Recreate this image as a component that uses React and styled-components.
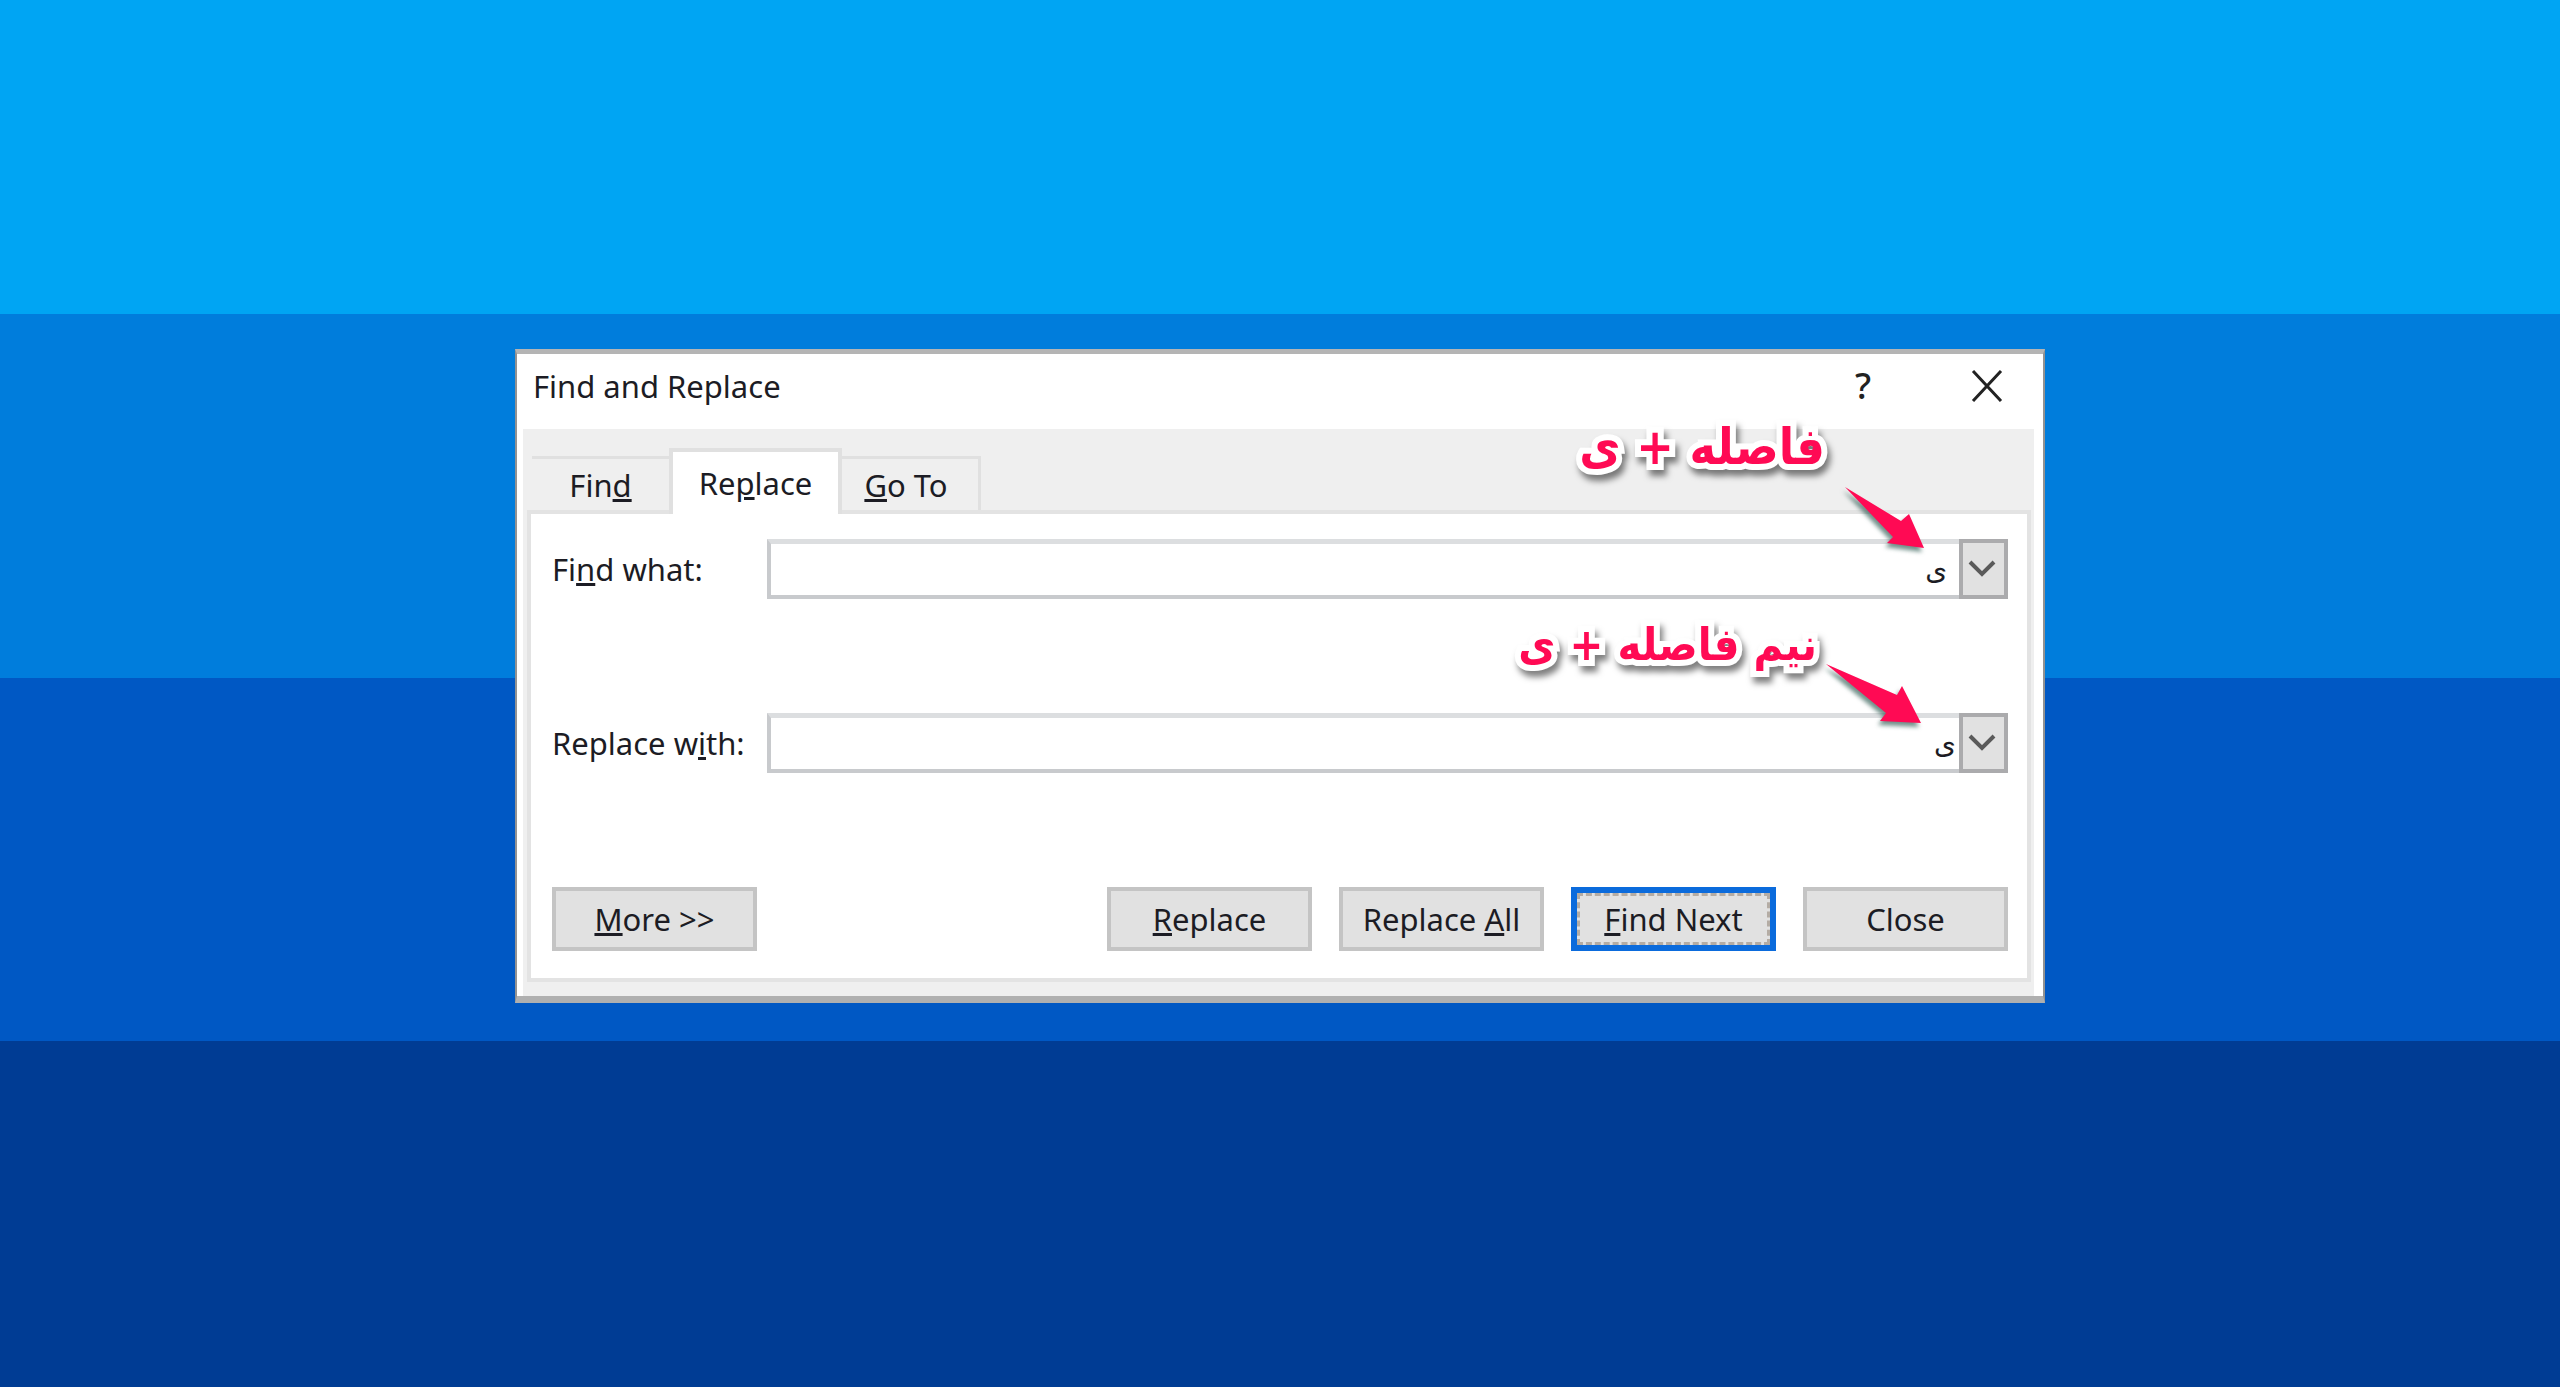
import styled, { createGlobalStyle } from "styled-components";

const GlobalStyle = createGlobalStyle`
  * {
    box-sizing: border-box;
  }

  body {
    margin: 0;
    font-family: "Noto Sans", "DejaVu Sans", sans-serif;
    font-size: 31px;
    line-height: 40px;
    color: #1c1c24;
  }
`;

const Desktop = styled.main`
  min-height: 100vh;
  padding-top: 349px;
  background: linear-gradient(
    #00a5f3 314px,
    #007ddc 314px 678px,
    #0058c4 678px 1041px,
    #003c94 1041px
  );
`;

const Dialog = styled.section`
  position: relative;
  width: 60%;
  max-width: 1530px;
  margin: 0 auto;
  padding: 0 9px 0 6px;
  background: #fff;
  border: solid #929292;
  border-width: 5px 2px 7px;
  border-top-color: #b4b4b4;
  border-bottom-color: #b0b0b0;
`;

const TitleBar = styled.header`
  display: flex;
  align-items: center;
  justify-content: space-between;
  height: 75px;
  padding: 0 29px 12px 10px;

  h1 {
    margin: 0;
    font-size: inherit;
    font-weight: 400;
  }
`;

const WindowButtons = styled.div`
  display: flex;
  gap: 88px;
`;

const WindowButton = styled.button`
  display: flex;
  align-items: center;
  justify-content: center;
  width: 36px;
  height: 40px;
  padding: 0;
  border: 0;
  background: none;
  font: 500 36px/40px "Noto Sans", sans-serif;
  color: #222;
`;

const Body = styled.div`
  padding: 19px 3px 14px 4px;
  background: #efefef;
`;

const Tabs = styled.div`
  display: flex;
  align-items: flex-end;
  padding-left: 5px;
`;

const Tab = styled.button`
  width: ${({ $width }) => $width}px;
  height: ${({ $active }) => ($active ? 66 : 54)}px;
  margin-bottom: ${({ $active }) => ($active ? -4 : 0)}px;
  padding: 0;
  border: solid #e0e0e0;
  border-width: ${({ $sides }) => $sides};
  background: ${({ $active }) => ($active ? "#fff" : "#efefef")};
  font: inherit;
  color: inherit;
  z-index: ${({ $active }) => ($active ? 1 : 0)};

  &:last-child {
    padding-right: 8px;
  }
`;

const Panel = styled.div`
  padding: 25px 19px 27px 21px;
  border: 4px solid #e3e3e3;
  background: #fff;
`;

const Field = styled.div`
  display: flex;
  align-items: center;
  margin-bottom: 114px;

  label {
    width: 215px;
    white-space: nowrap;
  }
`;

const Combo = styled.div`
  display: flex;
  flex: 1;
  height: 60px;
`;

const ComboInput = styled.input`
  flex: 1;
  min-width: 0;
  padding: 0 3px;
  border: solid #c8cacd;
  border-width: 5px 0 4px 4px;
  border-top-color: #dcdee0;
  background: #fff;
  font: 28px/40px "DejaVu Sans", sans-serif;
  color: #1c1c24;
  outline: 0;
`;

const ComboButton = styled.button`
  display: flex;
  align-items: center;
  justify-content: center;
  width: 49px;
  padding: 0 4px 0 0;
  border: 4px solid #ababad;
  background: #e1e1e1;
`;

const Actions = styled.div`
  display: flex;
  gap: 27px;
`;

const ActionButton = styled.button`
  width: 205px;
  height: 64px;
  padding: 0;
  border: ${({ $primary }) => ($primary ? "6px solid #0b6bdc" : "4px solid #c4c4c4")};
  outline: ${({ $primary }) => ($primary ? "3px dashed #b4aca4" : "0")};
  outline-offset: -9px;
  background: #e1e1e1;
  font: inherit;
  color: inherit;
  white-space: nowrap;

  &:first-child {
    margin-right: auto;
  }
`;

const Note = styled.p`
  position: absolute;
  top: ${({ $top }) => $top}px;
  right: ${({ $right }) => $right}px;
  margin: 0;
  font: 700 ${({ $size }) => $size}px/60px "DejaVu Sans Condensed", "DejaVu Sans", sans-serif;
  color: #ff0a54;
  white-space: nowrap;
  paint-order: stroke fill;
  -webkit-text-stroke: 12px #fff;
  filter: drop-shadow(3px 6px 3px rgba(0, 0, 0, 0.5));
`;

const Arrow = styled.svg`
  position: absolute;
  top: ${({ $top }) => $top}px;
  right: ${({ $right }) => $right}px;
  fill: #ff0a54;
  filter: drop-shadow(-2px 4px 2px rgba(20, 70, 60, 0.6));
`;

function ComboField({ id, label, value }) {
  return (
    <Field>
      <label htmlFor={id}>{label}</label>
      <Combo>
        <ComboInput id={id} dir="rtl" defaultValue={value} />
        <ComboButton aria-label="Open list">
          <svg width="28" height="18" viewBox="0 0 28 18" fill="none" stroke="#5a5a5a" strokeWidth="4">
            <path d="M2 2l12 12L26 2" />
          </svg>
        </ComboButton>
      </Combo>
    </Field>
  );
}

function App() {
  return (
    <>
      <GlobalStyle />
      <Desktop>
        <Dialog role="dialog" aria-labelledby="title">
          <TitleBar>
            <h1 id="title">Find and Replace</h1>
            <WindowButtons>
              <WindowButton aria-label="Help">?</WindowButton>
              <WindowButton aria-label="Close window">
                <svg width="32" height="32" viewBox="0 0 32 32" stroke="#222" strokeWidth="3">
                  <path d="M2 1l28 30M30 1L2 31" />
                </svg>
              </WindowButton>
            </WindowButtons>
          </TitleBar>

          <Body>
            <Tabs role="tablist">
              <Tab role="tab" $width={137} $sides="3px 0 0">
                Fin<u>d</u>
              </Tab>
              <Tab role="tab" aria-selected="true" $active $width={173} $sides="4px 4px 0">
                Re<u>p</u>lace
              </Tab>
              <Tab role="tab" $width={139} $sides="3px 3px 0 0">
                <u>G</u>o To
              </Tab>
            </Tabs>

            <Panel>
              <ComboField id="find" label={<>Fi<u>n</u>d what:</>} value={" ی"} />
              <ComboField id="replace" label={<>Replace w<u>i</u>th:</>} value="ی" />
              <Actions>
                <ActionButton>
                  <u>M</u>ore &gt;&gt;
                </ActionButton>
                <ActionButton>
                  <u>R</u>eplace
                </ActionButton>
                <ActionButton>
                  Replace <u>A</u>ll
                </ActionButton>
                <ActionButton $primary>
                  <u>F</u>ind Next
                </ActionButton>
                <ActionButton>Close</ActionButton>
              </Actions>
            </Panel>
          </Body>

          <Note dir="rtl" $top={63} $right={218} $size={50}>
            فاصله + ی
          </Note>
          <Arrow $top={132} $right={117} width="82" height="66" viewBox="0 0 82 66">
            <path d="M1 1L57 35L65 28L80 62L43 57L49 51Z" />
          </Arrow>
          <Note dir="rtl" $top={261} $right={226} $size={45}>
            نیم فاصله + ی
          </Note>
          <Arrow $top={309} $right={120} width="98" height="62" viewBox="0 0 98 62">
            <path d="M1 1L72 32L77 23L96 60L55 58L61 50Z" />
          </Arrow>
        </Dialog>
      </Desktop>
    </>
  );
}

export default App;
